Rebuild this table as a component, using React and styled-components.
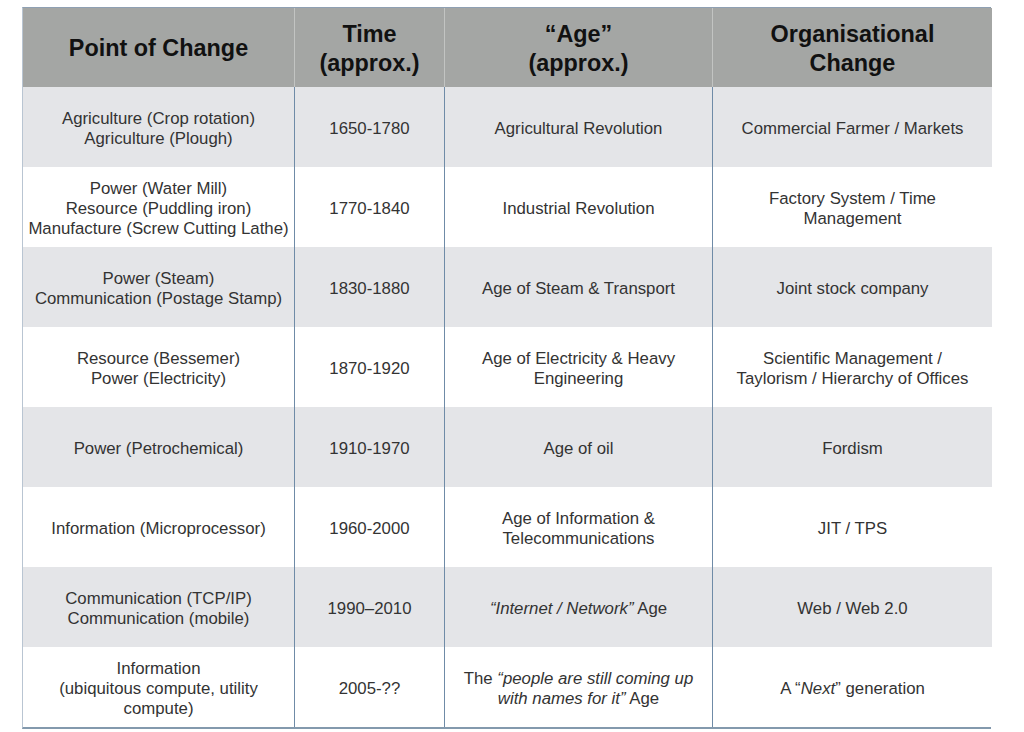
import React from "react";
import styled, { createGlobalStyle } from "styled-components";

const Global = createGlobalStyle`
  html, body { margin: 0; padding: 0; background: #ffffff; }
  body { font-family: "Liberation Sans", Arial, sans-serif; }
`;

const Page = styled.div`
  padding: 7px 0 0 22px;
`;

const Table = styled.div`
  display: grid;
  grid-template-columns: 271px 150px 268px 280px;
  width: 969px;
  box-sizing: border-box;
  border-top: 1px solid #8fa0b3;
  border-left: 1px solid #b9c5d2;
  border-right: 1px solid #7f95ab;
  border-bottom: 2px solid #8399ad;
`;

const HeadCell = styled.div`
  height: 79px;
  background: #a4a6a4;
  display: flex;
  align-items: center;
  justify-content: center;
  text-align: center;
  font-weight: bold;
  font-size: 23.4px;
  line-height: 29px;
  color: #111111;
  box-sizing: border-box;
  border-left: ${(p) => (p.$first ? "none" : "1px solid #c2c4c2")};
  padding-top: 2px;
`;

const Cell = styled.div`
  height: 80px;
  background: ${(p) => (p.$shade ? "#e4e5e8" : "#ffffff")};
  display: flex;
  align-items: center;
  justify-content: center;
  text-align: center;
  font-size: 16.8px;
  line-height: 20px;
  color: #333333;
  box-sizing: border-box;
  border-left: ${(p) => (p.$first ? "none" : "1px solid #6f8ba7")};
  padding: 3px 4px 0;
`;

const Em = styled.em`
  font-style: italic;
`;

const headers = [
  <>Point of Change</>,
  <>Time<br />(approx.)</>,
  <>“Age”<br />(approx.)</>,
  <>Organisational<br />Change</>,
];

const rows = [
  [
    <>Agriculture (Crop rotation)<br />Agriculture (Plough)</>,
    "1650-1780",
    "Agricultural Revolution",
    "Commercial Farmer / Markets",
  ],
  [
    <>Power (Water Mill)<br />Resource (Puddling iron)<br />Manufacture (Screw Cutting Lathe)</>,
    "1770-1840",
    "Industrial Revolution",
    <>Factory System / Time<br />Management</>,
  ],
  [
    <>Power (Steam)<br />Communication (Postage Stamp)</>,
    "1830-1880",
    "Age of Steam & Transport",
    "Joint stock company",
  ],
  [
    <>Resource (Bessemer)<br />Power (Electricity)</>,
    "1870-1920",
    <>Age of Electricity &amp; Heavy<br />Engineering</>,
    <>Scientific Management /<br />Taylorism / Hierarchy of Offices</>,
  ],
  ["Power (Petrochemical)", "1910-1970", "Age of oil", "Fordism"],
  [
    "Information (Microprocessor)",
    "1960-2000",
    <>Age of Information &amp;<br />Telecommunications</>,
    "JIT / TPS",
  ],
  [
    <>Communication (TCP/IP)<br />Communication (mobile)</>,
    "1990–2010",
    <><Em>“Internet / Network”</Em> Age</>,
    "Web / Web 2.0",
  ],
  [
    <>Information<br />(ubiquitous compute, utility<br />compute)</>,
    "2005-??",
    <>The <Em>“people are still coming up<br />with names for it”</Em> Age</>,
    <>A “<Em>Next</Em>” generation</>,
  ],
];

export default function App() {
  return (
    <>
      <Global />
      <Page>
        <Table>
          {headers.map((h, i) => (
            <HeadCell key={i} $first={i === 0}>
              <div>{h}</div>
            </HeadCell>
          ))}
          {rows.map((r, ri) =>
            r.map((c, ci) => (
              <Cell key={`${ri}-${ci}`} $first={ci === 0} $shade={ri % 2 === 0}>
                <div>{c}</div>
              </Cell>
            ))
          )}
        </Table>
      </Page>
    </>
  );
}
